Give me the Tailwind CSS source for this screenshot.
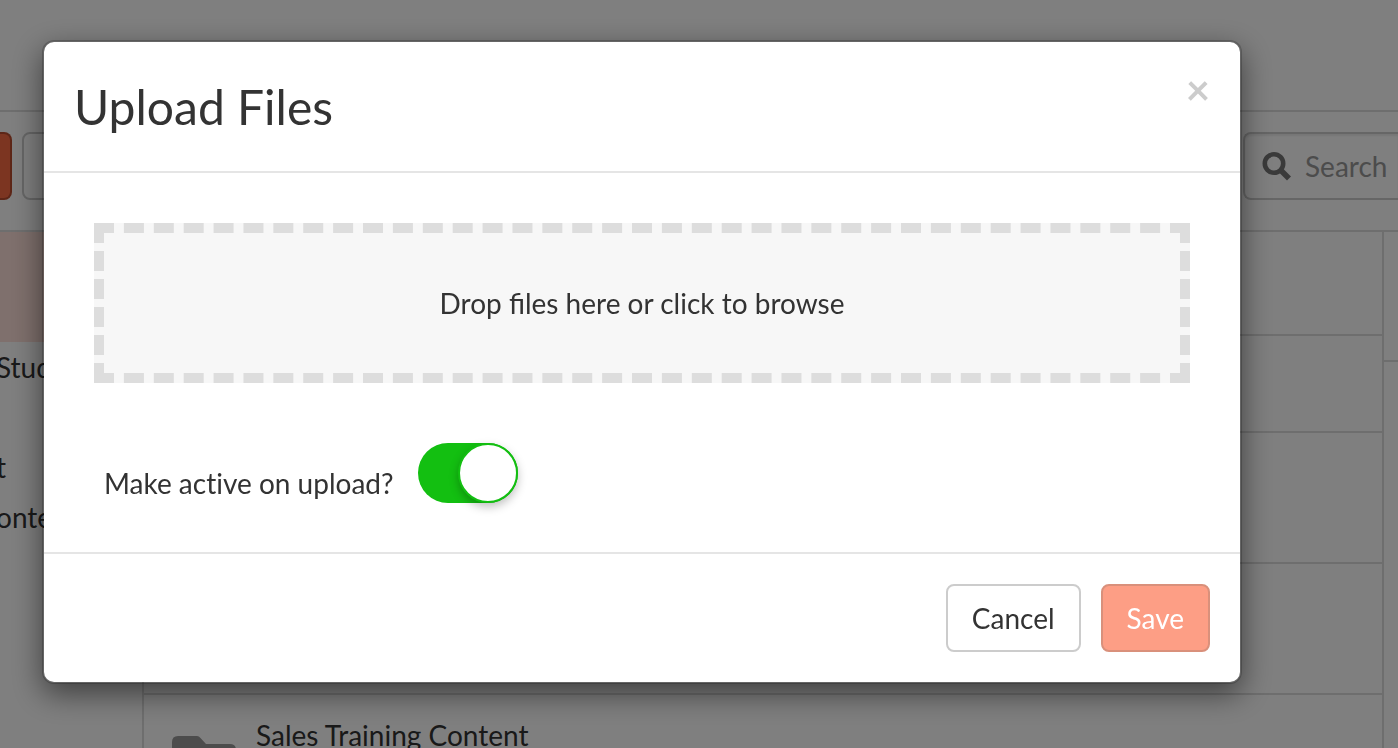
<!DOCTYPE html>
<html lang="en">
<head>
<meta charset="utf-8">
<meta name="viewport" content="width=device-width, initial-scale=1">
<title>Upload Files</title>
<script src="https://cdn.jsdelivr.net/npm/@tailwindcss/browser@4"></script>
</head>
<body class="h-screen overflow-hidden bg-white font-[Lato,sans-serif] text-[28px] leading-10 text-[#333]">

<!-- Page behind the dialog -->
<div class="flex h-full flex-col">
  <header class="h-28 shrink-0 border-b-2 border-[#ddd]"></header>

  <div class="flex h-30 shrink-0 items-start border-b-2 border-[#ddd] pt-5">
    <button type="button" aria-label="Add" class="h-17 w-3 rounded-r-lg border-2 border-l-0 border-[#ba4c2e] bg-[#f86a42]"></button>
    <button type="button" aria-label="More" class="ml-2.5 h-17 w-32 rounded-lg border-2 border-[#ccc]"></button>
    <div class="ml-auto flex h-17 w-[155px] items-center gap-3 rounded-l-lg border-2 border-r-0 border-[#ccc] pl-4 shadow-[inset_0_2px_2px_rgba(0,0,0,0.075)]">
      <svg class="size-8 shrink-0" viewBox="0 0 32 32" fill="none" stroke="#757575" aria-hidden="true">
        <circle cx="13" cy="13.5" r="9.2" stroke-width="4.6"/>
        <path d="M20 20.500 28 28.500" stroke-width="5.600"/>
      </svg>
      <input type="text" aria-label="Search" placeholder="Search" class="w-full min-w-0 bg-transparent outline-none placeholder:text-[#999]">
    </div>
  </div>

  <div class="flex min-h-0 flex-1">
    <nav class="w-36 shrink-0 overflow-hidden border-r-2 border-[#ddd]">
      <div class="h-[110px] bg-[#ffe1da]"></div>
      <ul class="-ml-1 leading-[50px]">
        <li class="h-25">Stud</li>
        <li>t</li>
        <li>onte</li>
      </ul>
    </nav>
    <main class="min-w-0 flex-1 overflow-hidden">
      <div class="h-26 border-b-2 border-[#ddd]"></div>
      <div class="h-[97px] border-b-2 border-[#ddd]"></div>
      <div class="h-[131px] border-b-2 border-[#ddd]"></div>
      <div class="h-[131px] border-b-2 border-[#ddd]"></div>
      <div class="flex gap-5 pt-5 pl-7">
        <svg class="mt-5 h-13 w-16 shrink-0" viewBox="0 0 64 52" fill="#999" aria-hidden="true">
          <path d="M6 1H25Q27 1 28.500 3L34 9H58Q64 9 64 15V46Q64 52 58 52H6Q0 52 0 46V7Q0 1 6 1Z"/>
        </svg>
        <a href="#" class="whitespace-nowrap">Sales Training Content</a>
      </div>
    </main>
    <aside class="w-4 shrink-0 border-l-2 border-[#ddd]">
      <div class="h-[130px] border-b-2 border-[#ddd]"></div>
    </aside>
  </div>
</div>

<!-- Dialog -->
<div class="fixed inset-0 overflow-hidden bg-black/50 pt-10 pr-[156px] pl-[42px]">
  <section role="dialog" aria-modal="true" aria-labelledby="dialog-title" class="rounded-xl border-2 border-black/20 bg-white bg-clip-padding shadow-[0_10px_30px_rgba(0,0,0,0.5)]">
    <header class="flex items-start justify-between border-b-2 border-[#e5e5e5] p-[30px]">
      <h1 id="dialog-title" class="text-[48px] leading-[69px]">Upload Files</h1>
      <button type="button" aria-label="Close" class="text-[42px] leading-[34px] font-bold text-[#ccc]">×</button>
    </header>
    <div class="p-[50px] pb-[49px]">
      <button type="button" class="block h-40 w-full border-10 border-dashed border-[#ddd] bg-[#f7f7f7]">Drop files here or click to browse</button>
      <div class="mt-15 flex items-start gap-6 pl-2.5">
        <label for="active" class="pt-5 [font-variant-ligatures:none]">Make active on upload?</label>
        <input id="active" type="checkbox" role="switch" checked class="flex h-15 w-25 appearance-none justify-start rounded-full bg-[#13bf11] before:size-15 before:rounded-full before:border-2 before:border-[#13bf11] before:bg-white before:shadow-[0_4px_10px_rgba(0,0,0,0.25)] checked:justify-end">
      </div>
    </div>
    <footer class="flex justify-end gap-5 border-t-2 border-[#e5e5e5] p-[30px]">
      <button type="button" class="rounded-lg border-2 border-[#ccc] bg-white px-6 py-3">Cancel</button>
      <button type="button" class="rounded-lg border-2 border-[#d9907b] bg-[#fd9e85] px-6 py-3 text-white">Save</button>
    </footer>
  </section>
</div>
</body>
</html>
